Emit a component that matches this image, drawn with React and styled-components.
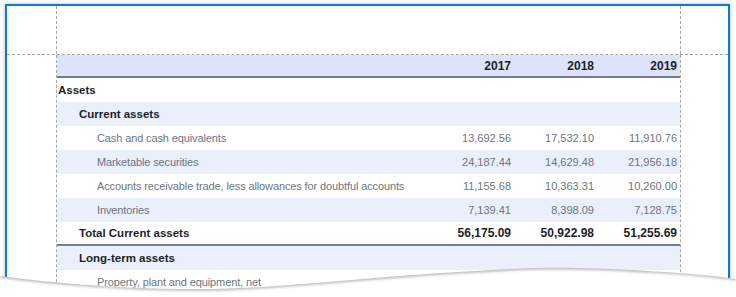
import React from "react";
import styled, { createGlobalStyle } from "styled-components";

const Global = createGlobalStyle`
  html, body { margin: 0; padding: 0; background: #ffffff; overflow: hidden; }
  #root { width: 736px; height: 297px; }
`;

const Viewport = styled.div`
  position: relative;
  width: 736px;
  height: 297px;
  overflow: hidden;
  padding: 4px 0 0 5px;
  box-sizing: border-box;
  background: #ffffff;
`;

const Page = styled.div`
  width: 725px;
  height: 320px;
  box-sizing: border-box;
  border: 2px solid #0a7bd2;
  background: #ffffff;
  box-shadow: 0 0 4px rgba(0, 0, 0, 0.28);
  display: flex;
  flex-direction: column;
`;

const Band = styled.div`
  display: flex;
  flex: ${(p) => (p.$grow ? 1 : "none")};
  height: ${(p) => (p.$height ? `${p.$height}px` : "auto")};
  border-bottom: ${(p) => (p.$divider ? "1px dashed #a5a5a5" : "none")};
`;

const SideMargin = styled.div`
  width: ${(p) => p.$width}px;
  flex: none;
`;

const Center = styled.div`
  width: 623px;
  flex: none;
  border-left: 1px dashed #a5a5a5;
  border-right: 1px dashed #a5a5a5;
  display: flex;
  flex-direction: column;
`;

const Row = styled.div`
  display: grid;
  grid-template-columns: 374px 83px 83px 83px;
  height: ${(p) => (p.$header ? 21 : p.$divider ? 22 : 24)}px;
  align-items: center;
  background: ${(p) => (p.$header ? "#dce3fa" : p.$striped ? "#e9effb" : "#ffffff")};
  border-bottom: ${(p) => (p.$header || p.$divider ? "2px solid #737c92" : "none")};
  font-family: "Liberation Sans", Arial, sans-serif;
  color: ${(p) => (p.$bold ? "#1c1f2b" : "#6e7485")};
  font-weight: ${(p) => (p.$bold ? 700 : 400)};
`;

const Label = styled.div`
  padding-left: ${(p) => [1, 22, 40][p.$level]}px;
  white-space: nowrap;
  overflow: hidden;
  font-size: ${(p) => (p.$bold ? "11.5px" : "11px")};
  letter-spacing: ${(p) => (p.$bold ? "0" : "-0.12px")};
`;

const Value = styled.div`
  text-align: right;
  padding-right: 3px;
  white-space: nowrap;
  font-size: ${(p) => (p.$bold ? "12px" : "11px")};
`;

const TornEdge = styled.svg`
  position: absolute;
  left: 0;
  top: 0;
  width: 736px;
  height: 297px;
  pointer-events: none;
`;

const rows = [
  { label: "Assets", level: 0, bold: true },
  { label: "Current assets", level: 1, bold: true, striped: true },
  { label: "Cash and cash equivalents", level: 2, values: ["13,692.56", "17,532.10", "11,910.76"] },
  { label: "Marketable securities", level: 2, striped: true, values: ["24,187.44", "14,629.48", "21,956.18"] },
  { label: "Accounts receivable trade, less allowances for doubtful accounts", level: 2, values: ["11,155.68", "10,363.31", "10,260.00"] },
  { label: "Inventories", level: 2, striped: true, values: ["7,139.41", "8,398.09", "7,128.75"] },
  { label: "Total Current assets", level: 1, bold: true, divider: true, values: ["56,175.09", "50,922.98", "51,255.69"] },
  { label: "Long-term assets", level: 1, bold: true, striped: true },
  { label: "Property, plant and equipment, net", level: 2 },
];

const curve =
  "M0 276 C 60 284, 140 290, 210 289 S 360 278, 440 273 S 540 267, 580 268 S 700 273, 736 279";

export default function App() {
  return (
    <>
      <Global />
      <Viewport>
        <Page>
          <Band $height={48} $divider>
            <SideMargin $width={49} />
            <Center />
          </Band>
          <Band $grow>
            <SideMargin $width={49} />
            <Center>
              <Row $header $bold>
                <Label $level={0} $bold />
                <Value $bold>2017</Value>
                <Value $bold>2018</Value>
                <Value $bold>2019</Value>
              </Row>
              {rows.map((r) => (
                <Row key={r.label} $striped={r.striped} $bold={r.bold} $divider={r.divider}>
                  <Label $level={r.level} $bold={r.bold}>{r.label}</Label>
                  {(r.values || ["", "", ""]).map((v, i) => (
                    <Value key={i} $bold={r.bold}>{v}</Value>
                  ))}
                </Row>
              ))}
            </Center>
          </Band>
        </Page>
        <TornEdge viewBox="0 0 736 297">
          <defs>
            <clipPath id="below">
              <path d={`${curve} L 736 297 L 0 297 Z`} />
            </clipPath>
            <filter id="soft" x="-5%" y="-50%" width="110%" height="200%">
              <feGaussianBlur stdDeviation="1.6" />
            </filter>
          </defs>
          <path d={`${curve} L 736 297 L 0 297 Z`} fill="#ffffff" />
          <g clipPath="url(#below)">
            <path d={curve} fill="none" stroke="rgba(0,0,0,0.38)" strokeWidth="2.5" filter="url(#soft)" />
          </g>
        </TornEdge>
      </Viewport>
    </>
  );
}
